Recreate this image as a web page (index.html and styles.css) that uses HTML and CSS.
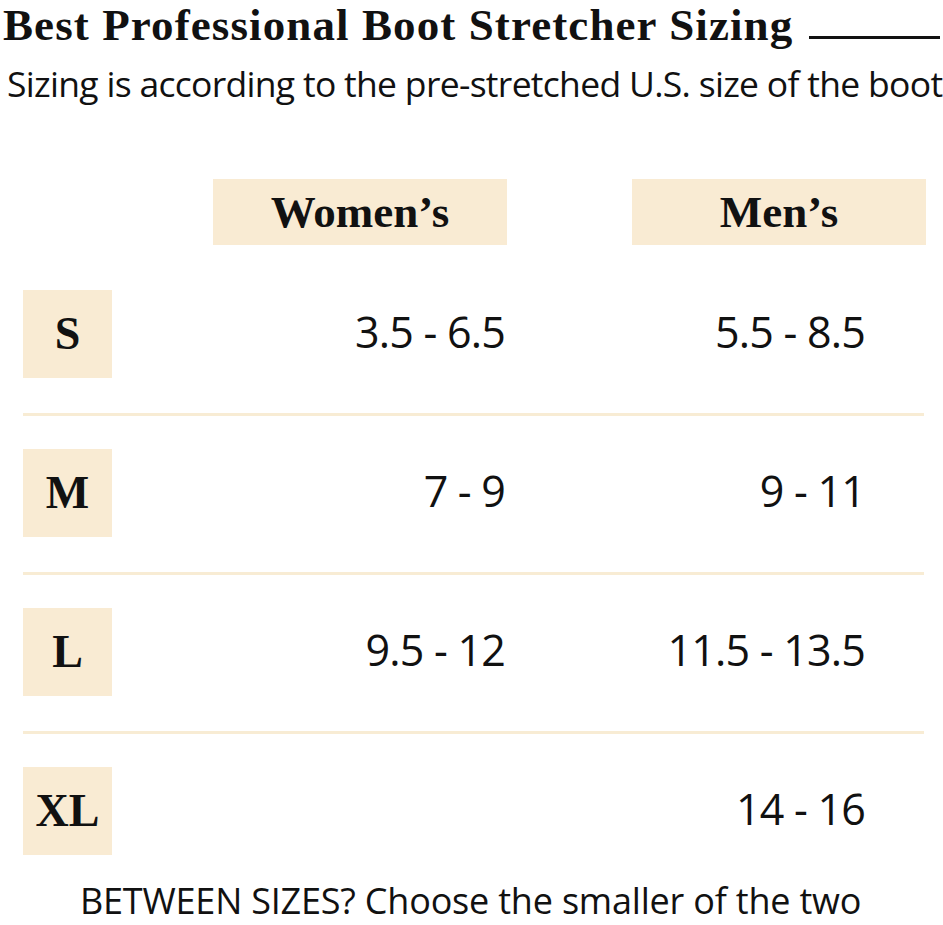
FILE: index.html
```html
<!DOCTYPE html>
<html lang="en">
<head>
<meta charset="utf-8">
<title>Best Professional Boot Stretcher Sizing</title>
<link rel="stylesheet" href="styles.css">
</head>
<body>
<div class="page">
  <header class="title-row">
    <h1 class="title">Best Professional Boot Stretcher Sizing</h1>
    <span class="title-rule"></span>
  </header>
  <p class="subtitle">Sizing is according to the pre-stretched U.S. size of the boot</p>

  <div class="chart">
    <div class="head-row">
      <span></span>
      <span></span>
      <div class="col-head">Women’s</div>
      <span></span>
      <div class="col-head">Men’s</div>
    </div>

    <div class="size-row">
      <div class="size-label">S</div>
      <span></span>
      <div class="val val-w">3.5 - 6.5</div>
      <span></span>
      <div class="val val-m">5.5 - 8.5</div>
    </div>
    <div class="divider"></div>

    <div class="size-row">
      <div class="size-label">M</div>
      <span></span>
      <div class="val val-w">7 - 9</div>
      <span></span>
      <div class="val val-m">9 - 11</div>
    </div>
    <div class="divider"></div>

    <div class="size-row">
      <div class="size-label">L</div>
      <span></span>
      <div class="val val-w">9.5 - 12</div>
      <span></span>
      <div class="val val-m">11.5 - 13.5</div>
    </div>
    <div class="divider"></div>

    <div class="size-row">
      <div class="size-label">XL</div>
      <span></span>
      <div class="val val-w"></div>
      <span></span>
      <div class="val val-m">14 - 16</div>
    </div>
  </div>

  <p class="note">BETWEEN SIZES? Choose the smaller of the two</p>
</div>
</body>
</html>
```

FILE: styles.css
```css
* { box-sizing: border-box; }

html, body {
  margin: 0;
  padding: 0;
  background: #ffffff;
  color: #111111;
}

.page {
  width: 943px;
  height: 925px;
}

.title-row {
  display: flex;
  align-items: flex-start;
  padding: 0 3px 0 3px;
  height: 44px;
}

.title {
  margin: 0;
  font-family: "Liberation Serif", "Times New Roman", serif;
  font-weight: bold;
  font-size: 45px;
  line-height: 50px;
  letter-spacing: 1.1px;
  white-space: nowrap;
  color: #111;
}

.title-rule {
  flex: 1;
  align-self: flex-end;
  height: 3px;
  background: #111;
  margin: 0 0 5px 16px;
}

.subtitle {
  margin: 15px 0 0 0;
  padding-left: 7px;
  font-family: "Open Sans", "Noto Sans", sans-serif;
  font-size: 35.5px;
  line-height: 48px;
  letter-spacing: -0.7px;
  white-space: nowrap;
  color: #111;
}

.chart {
  padding: 72px 0 0 23px;
}

.head-row,
.size-row {
  display: grid;
  grid-template-columns: 89px 101px 294px 125px 294px;
}

.col-head {
  height: 66px;
  background: #f9ebd3;
  display: flex;
  align-items: center;
  justify-content: center;
  font-family: "Liberation Serif", "Times New Roman", serif;
  font-weight: bold;
  font-size: 45px;
  color: #111;
}

.size-row {
  height: 88px;
  margin-top: 45px;
  align-items: center;
}

.size-label {
  height: 88px;
  background: #f9ebd3;
  display: flex;
  align-items: center;
  justify-content: center;
  padding-bottom: 2px;
  font-family: "Liberation Serif", "Times New Roman", serif;
  font-weight: bold;
  font-size: 46px;
  color: #111;
}

.val {
  padding-bottom: 6px;
  font-family: "Open Sans", "Noto Sans", sans-serif;
  font-size: 43px;
  letter-spacing: -0.8px;
  text-align: right;
  white-space: nowrap;
  color: #111;
}

.val-w { padding-right: 2px; }
.val-m { padding-right: 61px; }

.divider {
  width: 901px;
  height: 3px;
  background: #f8ecd4;
  margin-top: 35px;
  margin-bottom: -12px;
}

.note {
  margin: 26px 0 0 0;
  padding-left: 80px;
  font-family: "Open Sans", "Noto Sans", sans-serif;
  font-size: 36px;
  line-height: 40px;
  letter-spacing: -0.2px;
  white-space: nowrap;
  color: #111;
}
```
